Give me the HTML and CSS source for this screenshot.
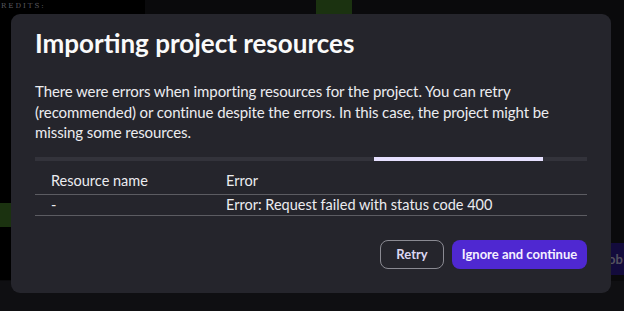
FILE: index.html
```html
<!DOCTYPE html>
<html lang="en">
  <head>
    <meta charset="UTF-8" />
    <meta name="viewport" content="width=device-width, initial-scale=1.0" />
    <title>Importing project resources</title>
    <link rel="stylesheet" href="styles.css">
  </head>
  <body>
    <div class="app">
      <div class="app-credits">REDITS:</div>
      <div class="app-tile app-tile-top"></div>
      <div class="app-tile app-tile-left"></div>
      <div class="app-tile app-tile-right">ob</div>
      <div class="app-footer"></div>
    </div>
    <div class="overlay">
      <div class="dialog">
        <h1 class="dialog-title">Importing project resources</h1>
        <p class="dialog-text">
          There were errors when importing resources for the project. You can retry
          (recommended) or continue despite the errors. In this case, the project might be
          missing some resources.
        </p>
        <div class="progress"><div class="progress-bar"></div></div>
        <table class="errors">
          <thead>
            <tr>
              <th class="col-name">Resource name</th>
              <th>Error</th>
            </tr>
          </thead>
          <tbody>
            <tr>
              <td class="col-name">-</td>
              <td>Error: Request failed with status code 400</td>
            </tr>
          </tbody>
        </table>
        <div class="actions">
          <button class="btn btn-outline">Retry</button>
          <button class="btn btn-primary">Ignore and continue</button>
        </div>
      </div>
    </div>
  </body>
</html>
```

FILE: styles.css
```css
html, body {
  margin: 0;
  height: 100%;
}
body {
  position: relative;
  overflow: hidden;
  background: #0a0a0c;
  font-family: Lato, "Noto Sans", sans-serif;
  color: #f2f2f4;
}

/* app behind the dialog */
.app {
  position: absolute;
  inset: 0;
  background: linear-gradient(#000, #000) 0 0 / 145px 280px no-repeat;
}
.app-credits {
  position: absolute;
  left: 1px;
  top: 2px;
  font-family: "DejaVu Serif", serif;
  font-size: 7px;
  letter-spacing: 2px;
  color: #5a5a60;
}
.app-tile {
  position: absolute;
  background: #1b3210;
}
.app-tile-top {
  left: 316px;
  top: 0;
  width: 36px;
  height: 14px;
}
.app-tile-left {
  left: 0;
  top: 203px;
  width: 12px;
  height: 24px;
}
.app-tile-right {
  left: 596px;
  top: 243px;
  width: 28px;
  height: 32px;
  background: #130b3c;
  color: #55525f;
  font-weight: 700;
  font-size: 13px;
  line-height: 32px;
  padding-left: 12px;
  box-sizing: border-box;
}
.app-footer {
  position: absolute;
  left: 0;
  right: 0;
  bottom: 0;
  height: 30px;
  background: #0f0f12;
}

/* dialog */
.overlay {
  position: absolute;
  inset: 0;
  padding: 14px 13px 0 11px;
}
.dialog {
  height: 279px;
  box-sizing: border-box;
  background: #25252c;
  border-radius: 9px;
  padding: 12px 24px 0 24px;
}
.dialog-title {
  margin: 0;
  font-size: 26px;
  line-height: 34px;
  font-weight: 700;
  color: #fafafa;
}
.dialog-text {
  margin: 21px 0 0;
  font-size: 15px;
  line-height: 20.5px;
  letter-spacing: -0.1px;
  color: #ececf0;
}
.progress {
  margin-top: 14px;
  height: 4px;
  background: #33333b;
  position: relative;
}
.progress-bar {
  position: absolute;
  left: 339px;
  top: 0;
  width: 169px;
  height: 100%;
  background: #e6e0ff;
}
.errors {
  width: 100%;
  margin-top: 7px;
  border-collapse: collapse;
  font-size: 14.5px;
  color: #ececf0;
}
.errors th {
  font-weight: 400;
  text-align: left;
  padding: 0;
  height: 26px;
  vertical-align: middle;
  border-bottom: 1px solid #5c5c62;
}
.errors td {
  height: 20px;
  padding: 0;
  border-bottom: 1px solid #5c5c62;
}
.errors .col-name {
  width: 175px;
  padding-left: 16px;
}
.actions {
  display: flex;
  justify-content: flex-end;
  gap: 8px;
  margin-top: 24px;
}
.btn {
  height: 29px;
  border-radius: 8px;
  font-family: inherit;
  font-size: 13px;
  font-weight: 700;
  white-space: nowrap;
  cursor: pointer;
}
.btn-outline {
  background: transparent;
  border: 1px solid #8a8a92;
  color: #dcd6f2;
  width: 64px;
  padding: 0;
}
.btn-primary {
  background: #4f28d1;
  border: 0;
  color: #f4f0ff;
  width: 135px;
  padding: 0;
}
```
